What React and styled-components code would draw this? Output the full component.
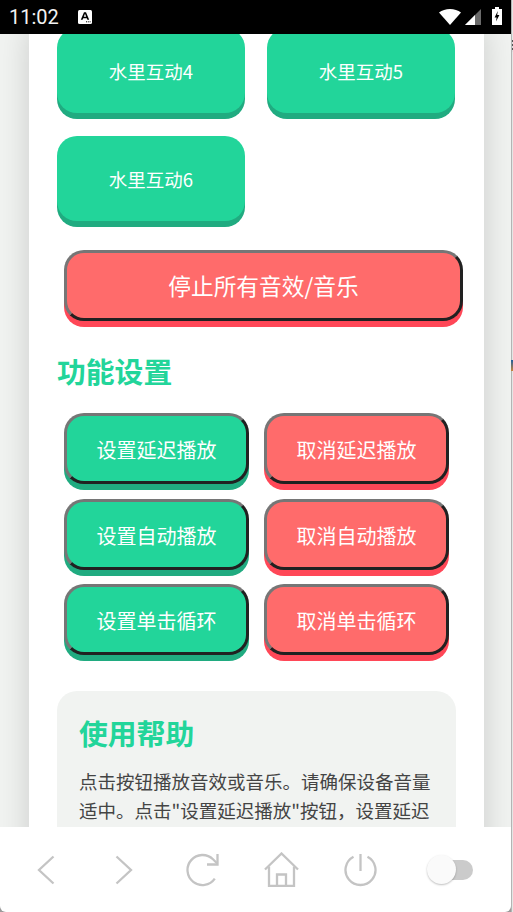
import React from 'react';
import styled, { createGlobalStyle } from 'styled-components';

const GREEN = '#22d59a';
const GREEN_SHADOW = '#20ab80';
const RED = '#ff6b6b';
const RED_SHADOW = '#ff4757';

const tiles = ['水里互动4', '水里互动5', '水里互动6'];
const settings = [
  ['设置延迟播放', '取消延迟播放'],
  ['设置自动播放', '取消自动播放'],
  ['设置单击循环', '取消单击循环'],
];

const App = () => (
  <Frame>
    <GlobalStyle />
    <Screen>
      <StatusBar>
        <Time>11:02</Time>
        <NoticeIcon>
          <svg width="14" height="14" viewBox="0 0 14 14">
            <rect width="14" height="14" rx="1.5" fill="#fff" />
            <path d="M2.8 9.8 6 2.2h2l3.2 7.6H9.4L8.8 8.2H5.2l-.6 1.6zM5.8 6.7h2.4L7 3.8z" fill="#000" />
            <path d="M8 11.8h1M9.8 11.8h1M11.6 11.8h1" stroke="#000" strokeWidth="1" />
          </svg>
        </NoticeIcon>
        <StatusIcons>
          <svg width="22" height="16" viewBox="0 0 22 16">
            <path d="M0 3.6C3 1.2 6.8 0 11 0s8 1.2 11 3.6L11 16z" fill="#fff" />
          </svg>
          <svg width="16" height="16" viewBox="0 0 16 16">
            <path d="M16 0v16H0z" fill="#6a6a6a" />
            <path d="M10 6v10H0z" fill="#fff" />
          </svg>
          <svg width="10" height="18" viewBox="0 0 10 18">
            <path d="M3 0h4v2h3v16H0V2h3z" fill="#fff" />
            <path d="M5.8 4 2.6 10.4h2l-.6 4.2 3.4-6.6H5.2z" fill="#000" />
          </svg>
        </StatusIcons>
      </StatusBar>

      <Main>
        <Card>
          <TileGrid>
            {tiles.map((label) => <Tile key={label}>{label}</Tile>)}
          </TileGrid>

          <StopButton>停止所有音效/音乐</StopButton>

          <SectionTitle>功能设置</SectionTitle>
          <SettingGrid>
            {settings.map(([on, off]) => (
              <React.Fragment key={on}>
                <SettingButton>{on}</SettingButton>
                <SettingButton $danger>{off}</SettingButton>
              </React.Fragment>
            ))}
          </SettingGrid>

          <HelpBox>
            <HelpTitle>使用帮助</HelpTitle>
            <HelpText>点击按钮播放音效或音乐。请确保设备音量适中。点击"设置延迟播放"按钮，设置延迟</HelpText>
          </HelpBox>
        </Card>
      </Main>

      <BottomBar>
        <NavCell>
          <svg width="18" height="30" viewBox="0 0 18 30">
            <path d="M16.5 1.5 2 15l14.5 13.5" />
          </svg>
        </NavCell>
        <NavCell>
          <svg width="18" height="30" viewBox="0 0 18 30">
            <path d="M1.5 1.5 16 15 1.5 28.5" />
          </svg>
        </NavCell>
        <NavCell>
          <svg width="33" height="34" viewBox="0 0 33 34">
            <path d="M28.8 25.6A15 15 0 1 1 27 6.3L31.5 10.8" />
            <path d="M31.5 1v10.5H21" />
          </svg>
        </NavCell>
        <NavCell>
          <svg width="35" height="35" viewBox="0 0 35 35">
            <path d="M1 17.5 17.5 1.5 34 17.5" />
            <path d="M5 14.5v19.5h25V14.5" />
            <path d="M13 34V22.5h9V34" />
          </svg>
        </NavCell>
        <NavCell>
          <svg width="33" height="34" viewBox="0 0 33 34">
            <path d="M9.5 3.73A15 15 0 1 0 23.5 3.73" />
            <path d="M16.5 1v17" />
          </svg>
        </NavCell>
        <Toggle>
          <ToggleKnob />
        </Toggle>
      </BottomBar>
    </Screen>

    <WindowEdge>
      <EdgeGrip />
      <EdgeMark />
    </WindowEdge>
  </Frame>
);

const GlobalStyle = createGlobalStyle`
  html, body {
    margin: 0;
    padding: 0;
    background: #fff;
  }
  body {
    font-family: "Noto Sans CJK SC", "Noto Sans", sans-serif;
  }
`;

const Frame = styled.div`
  display: flex;
  width: 513px;
  height: 912px;
  overflow: hidden;
  background: #9a9a9a;
`;

const Screen = styled.div`
  display: flex;
  flex-direction: column;
  width: 511px;
  height: 912px;
`;

const StatusBar = styled.div`
  flex: none;
  display: flex;
  align-items: center;
  height: 34px;
  padding: 0 9px 0 9px;
  box-sizing: border-box;
  background: #000;
`;

const Time = styled.span`
  font-family: Roboto, sans-serif;
  font-size: 20px;
  color: #f2f2f2;
  margin-right: 19px;
`;

const NoticeIcon = styled.span`
  display: flex;
`;

const StatusIcons = styled.div`
  display: flex;
  align-items: center;
  gap: 4px;
  margin-left: auto;

  svg:last-child {
    margin-left: 7px;
    margin-top: -2px;
  }
`;

const Main = styled.div`
  flex: 1;
  min-height: 0;
  overflow: hidden;
  background: #f1f3f1;
`;

/* page is scrolled a little, so the first row is cut by the status bar */
const Card = styled.div`
  width: 455px;
  box-sizing: border-box;
  margin: -6px 0 0 29px;
  padding: 0 28px 40px;
  background: #fff;
  box-shadow: 0 0 30px rgba(0, 0, 0, 0.16);
`;

const TileGrid = styled.div`
  display: grid;
  grid-template-columns: 188px 188px;
  gap: 23px 22px;
`;

const Tile = styled.button`
  height: 85px;
  padding: 0;
  border: none;
  border-radius: 20px;
  background: ${GREEN};
  box-shadow: 0 6px 0 ${GREEN_SHADOW};
  color: #fff;
  font-family: inherit;
  font-size: 18.5px;
`;

const StopButton = styled.button`
  display: block;
  width: 399px;
  height: 71px;
  margin: 29px 0 0 7px;
  padding: 0;
  border: 3px solid;
  border-color: #767676 #212121 #212121 #767676;
  border-radius: 20px;
  background: ${RED};
  box-shadow: 0 6px 0 ${RED_SHADOW};
  color: #fff;
  font-family: inherit;
  font-size: 22.7px;
`;

const SectionTitle = styled.h2`
  margin: 30px 0 0;
  font-size: 28.8px;
  line-height: 40px;
  font-weight: 700;
  color: ${GREEN};
`;

const SettingGrid = styled.div`
  display: grid;
  grid-template-columns: 185px 185px;
  gap: 14.5px 15px;
  margin: 22px 0 0 7px;
`;

const SettingButton = styled.button`
  height: 71px;
  padding: 2px 0 0;
  border: 3px solid;
  border-color: #767676 #212121 #212121 #767676;
  border-radius: 20px;
  background: ${(props) => (props.$danger ? RED : GREEN)};
  box-shadow: 0 6px 0 ${(props) => (props.$danger ? RED_SHADOW : GREEN_SHADOW)};
  color: #fff;
  font-family: inherit;
  font-size: 20px;
`;

const HelpBox = styled.section`
  margin-top: 36px;
  padding: 22px 22px 30px;
  border-radius: 20px;
  background: #f1f3f1;
`;

const HelpTitle = styled.h3`
  margin: 0;
  font-size: 28.8px;
  line-height: 40px;
  font-weight: 700;
  color: ${GREEN};
`;

const HelpText = styled.p`
  margin: 14px 0 0;
  font-size: 18.5px;
  line-height: 29px;
  color: #444;
`;

const BottomBar = styled.div`
  flex: none;
  display: grid;
  grid-template-columns: 78px 78px 79px 78px 80px 75px;
  align-items: center;
  justify-items: center;
  height: 85px;
  padding-left: 7px;
  box-sizing: border-box;
  border-radius: 0 0 6px 6px;
  background: #fff;
`;

const NavCell = styled.div`
  display: flex;

  svg {
    fill: none;
    stroke: #c4c4c4;
    stroke-width: 2.3;
  }
`;

const Toggle = styled.div`
  position: relative;
  justify-self: end;
  width: 33px;
  height: 20px;
  margin-right: 2px;
  border-radius: 10px;
  background: #cbcbcb;
`;

const ToggleKnob = styled.span`
  position: absolute;
  left: -13px;
  top: -5px;
  width: 29px;
  height: 29px;
  border-radius: 50%;
  background: #fafafa;
  box-shadow: 0 1px 2px rgba(0, 0, 0, 0.25);
`;

const WindowEdge = styled.div`
  position: relative;
  flex: none;
  width: 2px;
  background: #e4e6e4;
  border-left: 1px solid #b4b4b4;
  box-sizing: border-box;
`;

const EdgeGrip = styled.span`
  position: absolute;
  left: 0;
  top: 40px;
  width: 1px;
  height: 12px;
  background: repeating-linear-gradient(#555 0 2px, #ddd 2px 4px);
`;

const EdgeMark = styled.span`
  position: absolute;
  left: -1px;
  top: 360px;
  width: 2px;
  height: 11px;
  background: linear-gradient(#1f5f9e, #c8843a);
`;

export default App;
